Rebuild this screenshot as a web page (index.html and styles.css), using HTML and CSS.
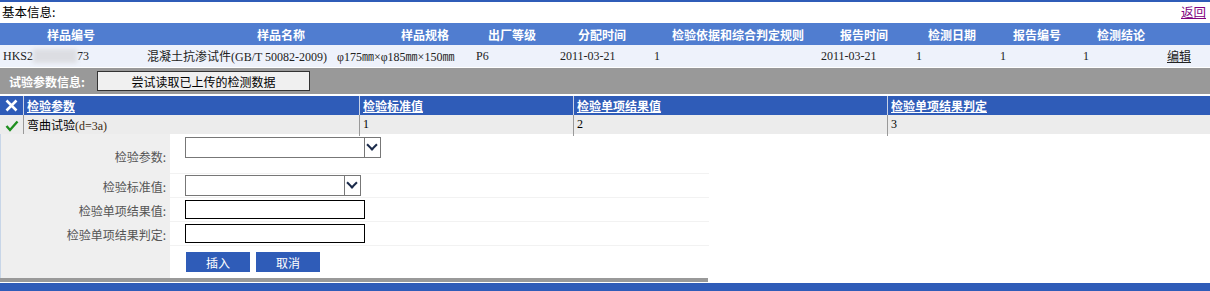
FILE: index.html
```html
<!DOCTYPE html>
<html lang="zh">
<head>
    <meta charset="UTF-8">
    <title>样品检验</title>
    <link rel="stylesheet" href="styles.css">
</head>
<body>

<div class="info-bar">
    <span>基本信息:</span>
    <a href="#" class="back-link">返回</a>
</div>

<!-- 样品基本信息 -->
<div class="sample-head">
    <span>样品编号</span>
    <span>样品名称</span>
    <span>样品规格</span>
    <span>出厂等级</span>
    <span>分配时间</span>
    <span>检验依据和综合判定规则</span>
    <span>报告时间</span>
    <span>检测日期</span>
    <span>报告编号</span>
    <span>检测结论</span>
</div>
<div class="sample-row">
    <span>HKS2<i class="blur"></i>73</span>
    <span>混凝土抗渗试件(GB/T 50082-2009)</span>
    <span>φ175㎜×φ185㎜×150㎜</span>
    <span>P6</span>
    <span>2011-03-21</span>
    <span>1</span>
    <span>2011-03-21</span>
    <span>1</span>
    <span>1</span>
    <span>1</span>
    <span><a href="#" class="edit-link">编辑</a></span>
</div>

<div class="param-bar">
    <span class="param-title">试验参数信息:</span>
    <button class="read-btn">尝试读取已上传的检测数据</button>
</div>

<!-- 检验参数列表 -->
<div class="param-table">
    <div class="param-head">
        <span class="icon-cell">
            <svg width="13" height="13" viewBox="0 0 13 13"><path d="M1.5 1.5 L11.5 11.5 M11.5 1.5 L1.5 11.5" stroke="#fff" stroke-width="2.6"/></svg>
        </span>
        <a href="#">检验参数</a>
        <a href="#">检验标准值</a>
        <a href="#">检验单项结果值</a>
        <a href="#">检验单项结果判定</a>
    </div>
    <div class="param-row">
        <span class="icon-cell">
            <svg width="14" height="12" viewBox="0 0 14 12"><path d="M1.5 6 L5 10 L12.5 1.5" stroke="#1f8f1f" stroke-width="2.4" fill="none"/></svg>
        </span>
        <span>弯曲试验<em>(d=3a)</em></span>
        <span class="num">1</span>
        <span class="num">2</span>
        <span class="num">3</span>
    </div>
</div>

<!-- 添加参数表单 -->
<div class="param-form">
    <div class="form-row first">
        <label>检验参数:</label>
        <div class="field">
            <div class="select wide"><span class="arrow"></span></div>
        </div>
    </div>
    <div class="form-row">
        <label>检验标准值:</label>
        <div class="field">
            <div class="select"><span class="arrow"></span></div>
        </div>
    </div>
    <div class="form-row">
        <label>检验单项结果值:</label>
        <div class="field"><input type="text"></div>
    </div>
    <div class="form-row">
        <label>检验单项结果判定:</label>
        <div class="field"><input type="text"></div>
    </div>
    <div class="form-row last">
        <label></label>
        <div class="field buttons">
            <button class="blue-btn">插入</button>
            <button class="blue-btn">取消</button>
        </div>
    </div>
</div>

<div class="gray-line"></div>
<div class="footer-bar"></div>

</body>
</html>
```

FILE: styles.css
```css
body {
    margin: 0;
    padding: 0;
    font-family: "Liberation Serif", "Noto Sans CJK SC", serif;
    font-size: 12px;
    color: #000;
    background-color: #fff;
}

.info-bar {
    display: flex;
    justify-content: space-between;
    align-items: center;
    height: 21px;
    border-top: 2px solid #2f5cb8;
    padding: 0 4px 0 2px;
    font-family: "Noto Sans CJK SC", sans-serif;
    font-size: 12.5px;
    line-height: 1;
}

.back-link {
    color: #800080;
}

.sample-head,
.sample-row {
    display: grid;
    height: 22px;
    align-items: center;
    white-space: nowrap;
}

.sample-head {
    grid-template-columns: 210px 144px 87px 90px 94px 168px 88px 85px 84px 1fr;
    padding-left: 47px;
    background-color: #507dd0;
    color: #fff;
    font-family: "Noto Sans CJK SC", sans-serif;
    font-weight: bold;
}

.sample-row {
    grid-template-columns: 144px 190px 139px 84px 94px 167px 95px 84px 83px 84px 1fr;
    padding-left: 3px;
    background-color: #eef2fb;
    color: #222;
}

.blur {
    display: inline-block;
    width: 44px;
    height: 14px;
    vertical-align: -3px;
    background-color: #dcdde2;
    filter: blur(2px);
}

.edit-link {
    color: #222;
}

.param-bar {
    display: flex;
    align-items: center;
    gap: 12px;
    height: 26px;
    margin-top: 1px;
    padding: 0 0 0 9px;
    background-color: #999;
    border-bottom: 2px solid #fff;
}

.param-title {
    color: #fff;
    font-family: "Noto Sans CJK SC", sans-serif;
    font-weight: bold;
}

.read-btn {
    width: 213px;
    height: 20px;
    padding: 0;
    border: 1px solid #333;
    background-color: #f0f0f0;
    font-family: "Noto Sans CJK SC", sans-serif;
    font-size: 12px;
    color: #000;
}

.param-head,
.param-row {
    display: grid;
    grid-template-columns: 23px 336px 214px 314px 1fr;
    white-space: nowrap;
}

.param-head {
    height: 19px;
    background-color: #2f5cb8;
}

.param-head a {
    color: #fff;
    font-family: "Noto Sans CJK SC", sans-serif;
    font-weight: bold;
    line-height: 19px;
    padding-left: 3px;
    border-left: 1px solid #c9d2e6;
}

.param-row {
    height: 19px;
    background-color: #ececec;
    line-height: 19px;
}

.param-row span {
    padding-left: 3px;
    border-left: 1px solid #999;
    font-family: "Noto Sans CJK SC", sans-serif;
}

.param-row em {
    font-style: normal;
    font-family: "Liberation Serif", serif;
    color: #3a2a10;
}

.param-row .num {
    font-family: "Liberation Serif", serif;
}

.param-head .icon-cell,
.param-row .icon-cell {
    display: flex;
    align-items: center;
    justify-content: center;
    padding: 0;
    border-left: none;
}

.param-form {
    width: 708px;
    border-left: 1px solid #c8d6e8;
    font-family: "Noto Sans CJK SC", sans-serif;
}

.form-row {
    display: grid;
    grid-template-columns: 169px 1fr;
    height: 24px;
}

.form-row.first {
    height: 40px;
}

.form-row.last {
    height: 32px;
}

.form-row label {
    display: flex;
    align-items: center;
    justify-content: flex-end;
    padding-right: 4px;
    background-color: #efefef;
    color: #555;
}

.form-row.first label {
    align-items: flex-start;
    padding-top: 14px;
}

.field {
    display: flex;
    align-items: center;
    padding-left: 15px;
    border-bottom: 1px solid #f2f2f2;
}

.form-row.first .field {
    align-items: flex-start;
    padding-top: 3px;
}

.form-row.last .field {
    border-bottom: none;
}

.select {
    display: flex;
    justify-content: flex-end;
    width: 174px;
    height: 19px;
    border: 1px solid #777;
    background-color: #fff;
}

.select.wide {
    width: 194px;
}

.arrow {
    width: 15px;
    border-left: 1px solid #777;
    position: relative;
}

.arrow::after {
    content: "";
    position: absolute;
    left: 3px;
    top: 3px;
    width: 6px;
    height: 6px;
    border-right: 2px solid #1a2a4a;
    border-bottom: 2px solid #1a2a4a;
    transform: rotate(45deg);
}

.field input {
    width: 178px;
    height: 17px;
    padding: 0;
    border: 1px solid #000;
}

.buttons {
    gap: 6px;
    padding-left: 16px;
    align-items: flex-start;
    padding-top: 6px;
}

.blue-btn {
    width: 64px;
    height: 20px;
    padding: 0;
    border: none;
    background-color: #2f5cb8;
    color: #fff;
    font-family: "Noto Sans CJK SC", sans-serif;
    font-size: 12px;
}

.gray-line {
    width: 708px;
    height: 4px;
    background-color: #999;
}

.footer-bar {
    height: 10px;
    margin-top: 1px;
    background-color: #2f5cb8;
}
```
